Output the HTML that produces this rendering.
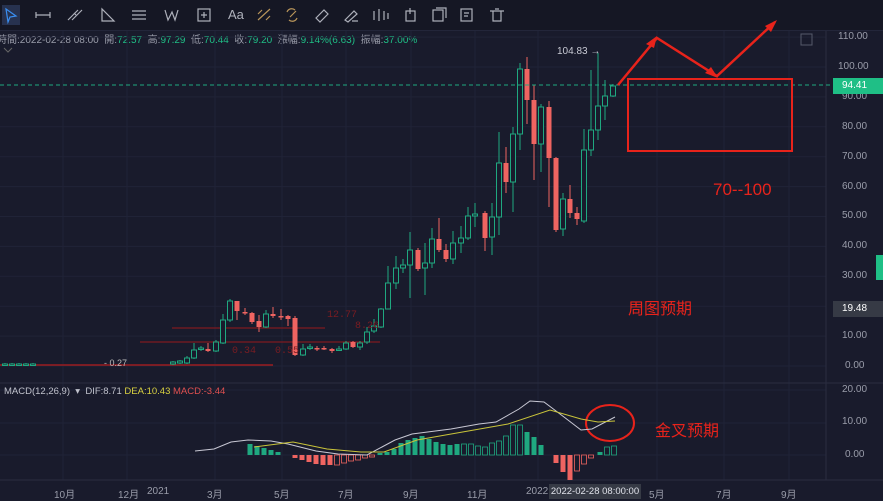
<!DOCTYPE html>
<html><head><meta charset="utf-8"><style>
html,body{margin:0;padding:0;background:#191b2c;width:883px;height:499px;overflow:hidden;font-family:"Liberation Sans","Noto Sans CJK TC",sans-serif}
#tb{position:absolute;left:0;top:0;width:883px;height:30px;background:#151724;border-bottom:1px solid #23263a}
.ic{position:absolute;top:7px;color:#aeb1bb;font-size:13px}
#info{position:absolute;left:-3px;top:31px;font-size:10px;color:#9a9daa;white-space:nowrap}
#info b{font-weight:normal;color:#1fbf86}
.ax{position:absolute;font-size:10px;color:#9a9daa;white-space:nowrap}
</style></head><body>
<div id="tb">
<div style="position:absolute;left:2px;top:5px;width:18px;height:20px;background:#27324f"></div>
<svg width="520" height="30" style="position:absolute;left:0;top:0" fill="none" stroke="#aeb1bb" stroke-width="1.2">
<path d="M6 9 L16 16 L10 17 L8 22 Z" stroke="#3a8ef0"/>
<path d="M36 15 H50 M36 12 V18 M50 12 V18"/>
<path d="M68 20 L78 10 M72 20 L82 10 M74 13 L76 15"/>
<path d="M102 9 V21 H114 Z"/>
<path d="M132 11 H146 M132 15 H146 M132 19 H146"/>
<path d="M165 10 L168 20 L172 12 L175 20 L178 10"/>
<rect x="198" y="9" width="12" height="12"/><path d="M204 12 V18 M201 15 H207"/>
<path d="M258 20 L270 9 M258 14 l4 -4 M266 20 l4 -4" stroke="#b8955a"/>
<path d="M287 12 a5 5 0 0 1 8 -2 M297 18 a5 5 0 0 1 -8 2 M290 17 l6 -6" stroke="#b8955a"/>
<path d="M316 18 L324 10 L328 14 L320 22 Z"/>
<path d="M345 20 L354 11 L357 14 L348 22 Z M352 21 h6"/>
<path d="M374 11 V20 M379 9 V21 M384 11 V20 M388 13 V19"/>
<rect x="406" y="11" width="9" height="10"/><path d="M410 8 V14"/>
<rect x="433" y="10" width="10" height="11"/><path d="M436 8 H446 V18"/>
<rect x="461" y="9" width="11" height="12"/><path d="M464 13 H469 M464 16 H468"/>
<path d="M490 11 H504 M493 11 V21 H501 V11 M495 9 H499"/>
</svg>
<span class="ic" style="left:228px">Aa</span>
</div>
<div id="info">時間:2022-02-28 08:00 &nbsp;開:<b>72.57</b> &nbsp;高:<b>97.29</b> &nbsp;低:<b>70.44</b> &nbsp;收:<b>79.20</b> &nbsp;漲幅:<b>9.14%(6.63)</b> &nbsp;振幅:<b>37.00%</b></div>
<svg id="ch" width="883" height="499" style="position:absolute;left:0;top:0"></svg>
<div class="ax" style="left:838px;top:31px">110.00</div>
<div class="ax" style="left:838px;top:61px">100.00</div>
<div class="ax" style="left:842px;top:91px">90.00</div>
<div class="ax" style="left:842px;top:121px">80.00</div>
<div class="ax" style="left:842px;top:151px">70.00</div>
<div class="ax" style="left:842px;top:181px">60.00</div>
<div class="ax" style="left:842px;top:210px">50.00</div>
<div class="ax" style="left:842px;top:240px">40.00</div>
<div class="ax" style="left:842px;top:270px">30.00</div>
<div class="ax" style="left:842px;top:330px">10.00</div>
<div class="ax" style="left:845px;top:360px">0.00</div>
<div class="ax" style="left:833px;top:78px;width:50px;height:16px;background:#1fbf86;color:#fff;line-height:16px;text-indent:9px">94.41</div>
<div class="ax" style="left:833px;top:301px;width:50px;height:16px;background:#363a45;color:#fff;line-height:16px;text-indent:9px">19.48</div>
<div class="ax" style="left:842px;top:384px">20.00</div>
<div class="ax" style="left:842px;top:416px">10.00</div>
<div class="ax" style="left:845px;top:449px">0.00</div>
<div class="ax" style="left:4px;top:386px;font-size:9.5px;color:#c0c2cc">MACD(12,26,9) &nbsp;▾ &nbsp;DIF:8.71 <span style="color:#d8d040">DEA:10.43</span> <span style="color:#e05050">MACD:-3.44</span></div>
<div class="ax" style="left:54px;top:486px">10月</div>
<div class="ax" style="left:118px;top:486px">12月</div>
<div class="ax" style="left:147px;top:486px">2021</div>
<div class="ax" style="left:207px;top:486px">3月</div>
<div class="ax" style="left:274px;top:486px">5月</div>
<div class="ax" style="left:338px;top:486px">7月</div>
<div class="ax" style="left:403px;top:486px">9月</div>
<div class="ax" style="left:467px;top:486px">11月</div>
<div class="ax" style="left:526px;top:486px">2022</div>
<div class="ax" style="left:549px;top:484px;width:92px;height:15px;line-height:15px;background:#363a45;color:#e0e2ea;text-align:center;font-size:9.5px;overflow:hidden">2022-02-28 08:00:00</div>
<div class="ax" style="left:649px;top:486px">5月</div>
<div class="ax" style="left:716px;top:486px">7月</div>
<div class="ax" style="left:781px;top:486px">9月</div>
<div class="ax" style="left:557px;top:46px;color:#c8cad4">104.83 →</div>
<div class="ax" style="left:327px;top:310px;color:#7a1c22;font-family:'Liberation Mono',monospace">12.77</div>
<div class="ax" style="left:355px;top:321px;color:#7a1c22;font-family:'Liberation Mono',monospace">8.26</div>
<div class="ax" style="left:232px;top:346px;color:#7a1c22;font-family:'Liberation Mono',monospace">0.34</div>
<div class="ax" style="left:275px;top:346px;color:#7a1c22;font-family:'Liberation Mono',monospace">0.55</div>
<div class="ax" style="left:104px;top:358px;color:#bbb;font-size:9px">- 0.27</div>
<div style="position:absolute;left:713px;top:180px;color:#e8231b;font-size:17px;white-space:nowrap">70--100</div>
<div style="position:absolute;left:628px;top:295px;color:#e8231b;font-size:16px;white-space:nowrap">周图预期</div>
<div style="position:absolute;left:655px;top:417px;color:#e8231b;font-size:16px;white-space:nowrap">金叉预期</div>
<script>
var s=document.getElementById('ch'),h='';
function L(a){h+=a}
[63,127,215,282,346,411,475,538,657,724,789].forEach(function(x){L('<line x1="'+x+'" y1="31" x2="'+x+'" y2="480" stroke="#202337"/>')});
for(var p=0;p<=110;p+=10){var y=366-2.99*p;L('<line x1="0" y1="'+y+'" x2="826" y2="'+y+'" stroke="#202337"/>')}
[423,455,390].forEach(function(y){L('<line x1="0" y1="'+y+'" x2="826" y2="'+y+'" stroke="#202337"/>')});
L('<line x1="826" y1="31" x2="826" y2="480" stroke="#2a2d40"/>');
L('<line x1="0" y1="383" x2="883" y2="383" stroke="#2a2d40"/><line x1="0" y1="480" x2="883" y2="480" stroke="#2a2d40"/>');
L('<rect x="876" y="255" width="7" height="25" fill="#1fbf86"/>');
L('<rect x="801" y="34" width="11" height="11" fill="none" stroke="#555a6a"/>');
L('<path d="M4 48 l4 4 l4 -4" fill="none" stroke="#666" />');
L('<line x1="172" y1="328" x2="325" y2="328" stroke="#6e1a22" stroke-width="1.5"/>');
L('<line x1="140" y1="342" x2="380" y2="342" stroke="#6e1a22" stroke-width="1.5"/>');
L('<line x1="0" y1="365" x2="273" y2="365" stroke="#9a1c20" stroke-width="1.5"/>');
var G='#1fa880',R='#ef6461';
var c=[[5,365,364,363,366],[12,365,364,363,366],[19,365,364,363,366],[26,365,364,363,366],[33,365,364,363,366],[173,364,362,361,365],[180,363,361,360,364],[187,363,358,356,364],[194,358,350,343,359],[201,349,348,346,351],[208,349,351,343,352],[216,351,342,340,352],[223,343,320,314,344],[230,320,301,299,322],[237,301,311,301,320],[245,312,313,308,315],[252,313,322,312,324],[259,321,327,315,332],[266,327,314,310,328],[273,314,316,307,318],[281,316,317,309,320],[288,316,319,315,326],[295,318,355,316,356],[303,355,349,344,356],[310,348,347,344,350],[317,348,349,346,351],[324,348,349,346,350],[332,349,351,348,353],[339,350,349,346,351],[346,349,343,341,350],[353,342,347,341,348],[360,347,343,341,350],[367,342,332,327,344],[374,331,326,319,333],[381,327,309,308,328],[388,309,283,266,298],[396,283,268,256,289],[403,268,265,259,273],[410,265,250,232,298],[418,250,269,248,271],[425,268,263,243,295],[432,263,239,228,268],[439,239,250,218,252],[446,250,259,244,262],[453,259,243,231,264],[461,243,238,226,253],[468,238,216,207,240],[475,216,214,203,227],[485,213,238,211,251],[492,237,217,203,255],[499,217,163,132,235],[506,163,182,147,193],[513,182,134,127,212],[520,134,69,63,150],[527,69,100,57,124],[534,100,144,85,180],[541,144,107,104,172],[549,107,158,101,207],[556,158,230,157,232],[563,229,199,193,236],[570,199,213,185,218],[577,213,219,207,225],[584,221,150,129,223],[591,150,130,70,156],[598,130,106,53,140],[605,106,96,80,120],[613,96,86,84,97]];
c.forEach(function(k){var x=k[0],o=k[1],cl=k[2],up=cl<=o,col=up?G:R,t=Math.min(o,cl),b=Math.max(o,cl);if(b-t<1.5)b=t+1.5;
L('<line x1="'+x+'" y1="'+k[3]+'" x2="'+x+'" y2="'+k[4]+'" stroke="'+col+'"/>');
L('<rect x="'+(x-2.5)+'" y="'+t+'" width="5" height="'+(b-t)+'" '+(up?'fill="#191b2c" stroke="'+col+'"':'fill="'+col+'"')+'/>');});
L('<line x1="0" y1="85" x2="833" y2="85" stroke="#1fa880" stroke-dasharray="4,3"/>');
var r='#e8231b';
L('<rect x="628" y="79" width="164" height="72" fill="none" stroke="'+r+'" stroke-width="2"/>');
L('<path d="M618 85 L657 38 L717 76 L775 22" fill="none" stroke="'+r+'" stroke-width="2.5"/>');
L('<path d="M657 36 L646 44 L654 48 Z M718 78 L705 73 L711 67 Z M777 20 L765 26 L771 32 Z" fill="'+r+'"/>');
L('<ellipse cx="610" cy="423" rx="24" ry="18" fill="none" stroke="'+r+'" stroke-width="2"/>');
var bars=[[250,11],[257,9],[264,7],[271,5],[278,3],[295,-3],[302,-5],[309,-7],[316,-9],[323,-10],[330,-10],[337,-10],[344,-8],[351,-6],[358,-5],[365,-3],[372,-2],[380,2],[387,3],[394,6],[401,12],[408,15],[415,17],[422,19],[429,16],[436,13],[443,11],[450,10],[457,11],[464,11],[471,11],[478,9],[485,8],[492,12],[499,14],[506,19],[513,30],[520,30],[527,23],[534,18],[541,10],[556,-8],[563,-17],[570,-25],[577,-16],[584,-9],[591,-3],[600,3],[607,8],[614,9]];
bars.forEach(function(b,i){var x=b[0],v=b[1],col=v>0?G:R,hol=(i>=11&&i<=16)||(x>=464&&x<=485)||(x>=492&&x<=520)||(x>=577&&x<=591)||(x>=607);
var y=v>0?455-v:455,hh=Math.abs(v);
L('<rect x="'+(x-2.5)+'" y="'+y+'" width="5" height="'+hh+'" '+(hol?'fill="#191b2c" stroke="'+col+'" stroke-width="0.8"':'fill="'+col+'"')+'/>');});
L('<polyline fill="none" stroke="#c8c8d4" stroke-width="1" points="195,451 214,449 231,442 248,440 271,441 288,444 316,451 338,454 367,455 395,440 412,434 451,429 479,424 496,422 519,409 530,401 544,402 564,417 581,430 592,429 615,417"/>');
L('<polyline fill="none" stroke="#c9c43a" stroke-width="1" points="254,447 293,442 327,449 361,452 384,452 417,440 474,430 508,424 550,410 581,419 598,422 615,421"/>');
s.innerHTML=h;
</script>
</body></html>
